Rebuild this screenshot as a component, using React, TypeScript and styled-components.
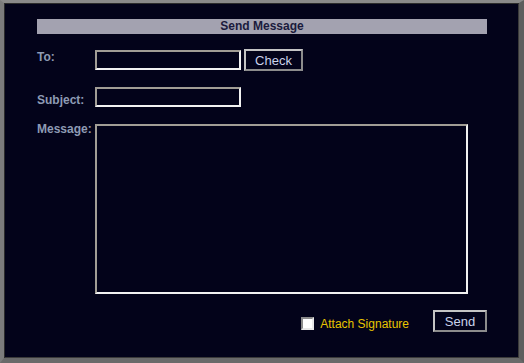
import React, { useState } from "react"
import styled, { createGlobalStyle } from "styled-components"

const GlobalStyle = createGlobalStyle`
    html, body {
        margin: 0;
        padding: 0;
        background: #03031a;
    }
    * {
        box-sizing: border-box;
    }
`

const App: React.FC = () => {
    const [to, setTo] = useState("")
    const [subject, setSubject] = useState("")
    const [message, setMessage] = useState("")
    const [signature, setSignature] = useState(false)

    return (
        <>
            <GlobalStyle />
            <Frame>
                <Panel>
                    <TitleBar>Send Message</TitleBar>

                    <Row gap={15}>
                        <Label offset={1}>To:</Label>
                        <Field>
                            <TextInput
                                value={to}
                                onChange={(e) => setTo(e.target.value)}
                            />
                            <Button width={59}>Check</Button>
                        </Field>
                    </Row>

                    <Row gap={16}>
                        <Label offset={6}>Subject:</Label>
                        <Field>
                            <TextInput
                                value={subject}
                                onChange={(e) => setSubject(e.target.value)}
                            />
                        </Field>
                    </Row>

                    <Row gap={17}>
                        <Label offset={-2}>Message:</Label>
                        <Field>
                            <MessageBox
                                value={message}
                                onChange={(e) => setMessage(e.target.value)}
                            />
                        </Field>
                    </Row>

                    <Footer>
                        <CheckLabel>
                            <CheckBox
                                type="checkbox"
                                checked={signature}
                                onChange={(e) => setSignature(e.target.checked)}
                            />
                            Attach Signature
                        </CheckLabel>
                        <Button width={54}>Send</Button>
                    </Footer>
                </Panel>
            </Frame>
        </>
    )
}

const Frame = styled.div`
    width: 524px;
    height: 363px;
    background: #03031a;
    border-style: solid;
    border-width: 3px 5px 5px 4px;
    border-color: #8a8a8a #5e5e5e #6a6a6a #7c7c7c;
    box-shadow: inset 1px 1px 0 #2c2c2c, inset -1px -1px 0 #3a3a3a;
    padding: 16px 0 0 33px;
`

const Panel = styled.div`
    width: 450px;
    font-family: "Liberation Sans", Arial, sans-serif;
`

const TitleBar = styled.div`
    height: 15px;
    line-height: 15px;
    background: #a3a2b0;
    color: #1a1a3c;
    font-size: 12px;
    font-weight: bold;
    text-align: center;
`

const Row = styled.div<{ gap: number }>`
    display: grid;
    grid-template-columns: 58px 1fr;
    align-items: start;
    margin-top: ${({ gap }) => gap}px;
`

const Label = styled.div<{ offset: number }>`
    color: #8e9bb4;
    font-size: 12px;
    font-weight: bold;
    line-height: 14px;
    margin-top: ${({ offset }) => offset}px;
    white-space: nowrap;
`

const Field = styled.div`
    display: flex;
    align-items: center;
    gap: 3px;
`

const inset = `
    background: #03031a;
    color: #e0e4f0;
    border-style: solid;
    border-width: 2px;
    border-color: #a19d95 #f2f2f2 #f2f2f2 #a19d95;
    outline: none;
    font-family: "Liberation Sans", Arial, sans-serif;
    font-size: 12px;
`

const TextInput = styled.input`
    ${inset}
    width: 146px;
    height: 20px;
    padding: 0 3px;
`

const MessageBox = styled.textarea`
    ${inset}
    display: block;
    width: 373px;
    height: 170px;
    padding: 3px;
    resize: none;
`

const Button = styled.button<{ width: number }>`
    width: ${({ width }) => width}px;
    height: 22px;
    padding: 0;
    background: #03031a;
    color: #c9d2ea;
    font-family: "Liberation Sans", Arial, sans-serif;
    font-size: 13px;
    border-style: solid;
    border-width: 2px;
    border-color: #c4c4c4 #8c8c8c #8c8c8c #c4c4c4;
    cursor: pointer;
`

const Footer = styled.div`
    display: flex;
    justify-content: flex-end;
    align-items: center;
    margin-top: 16px;
    gap: 24px;
`

const CheckLabel = styled.label`
    display: flex;
    align-items: center;
    gap: 6px;
    color: #e8c400;
    font-size: 12px;
    margin-top: 5px;
    cursor: pointer;
`

const CheckBox = styled.input`
    appearance: none;
    margin: 0;
    width: 13px;
    height: 13px;
    background: #fff;
    border-style: solid;
    border-width: 2px;
    border-color: #8a8a8a #e8e8e8 #e8e8e8 #8a8a8a;

    &:checked {
        background: #fff
            radial-gradient(circle, #03031a 0 2px, transparent 3px);
    }
`

export default App
